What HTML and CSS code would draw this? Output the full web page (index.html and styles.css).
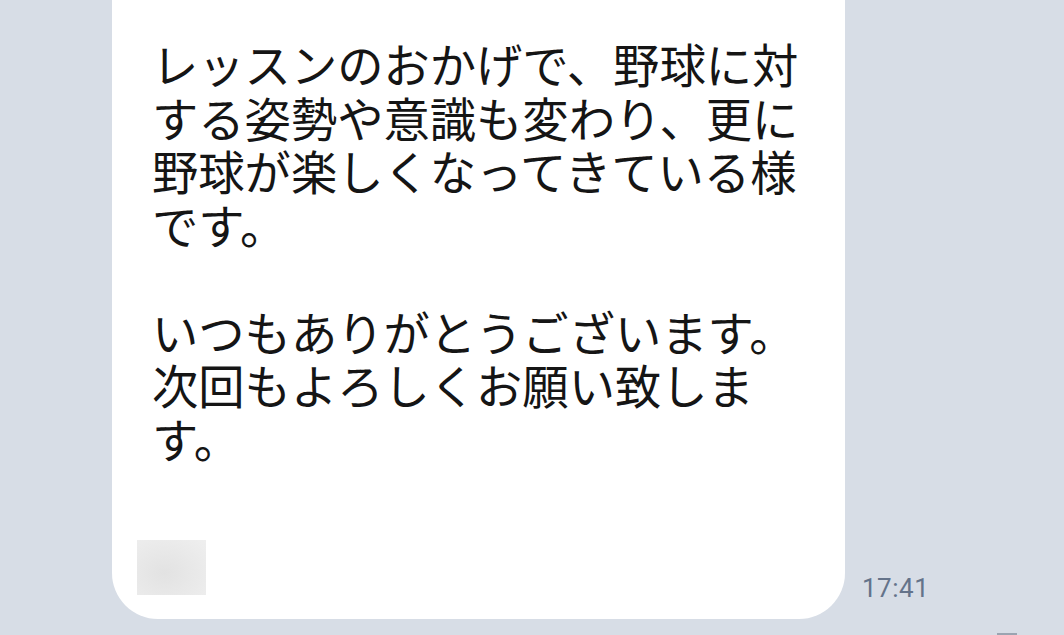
FILE: index.html
```html
<!DOCTYPE html>
<html lang="ja">
<head>
    <meta charset="UTF-8">
    <meta name="viewport" content="width=device-width, initial-scale=1.0">
    <title>Chat</title>
    <link rel="stylesheet" href="styles.css">
</head>
<body>

    <div class="chat">
        <div class="row">
            <div class="bubble">
                <p class="msg">レッスンのおかげで、野球に対<br>する姿勢や意識も変わり、更に<br>野球が楽しくなってきている様<br>です。<br><br>いつもありがとうございます。<br>次回もよろしくお願い致しま<br>す。</p>
                <div class="thumb"></div>
            </div>
            <span class="time">17:41</span>
        </div>
    </div>

    <div class="peek"></div>

</body>
</html>
```

FILE: styles.css
```css
body {
    margin: 0;
    height: 635px;
    overflow: hidden;
    background: #d7dde6;
    font-family: "Noto Sans CJK JP", "Noto Sans", sans-serif;
    position: relative;
}
.chat { padding-left: 112px; }
.row { display: flex; align-items: flex-end; gap: 17px; }

.bubble {
    width: 733px;
    margin-top: -60px;
    padding: 96px 0 24px 0;
    background: #fff;
    border-radius: 46px;
    box-sizing: border-box;
}
.msg {
    margin: 0 0 76px 40px;
    font-size: 46.3px;
    line-height: 53.5px;
    color: #151515;
    white-space: nowrap;
}
.thumb {
    width: 69px;
    height: 55px;
    margin-left: 25px;
    background: radial-gradient(ellipse at 40% 60%, #e2e2e2 0%, #eaeaea 60%, #efefef 100%);
}
.time {
    margin-bottom: 16px;
    font-family: Roboto, "Liberation Sans", sans-serif;
    font-size: 26px;
    color: #64738a;
    letter-spacing: 0.5px;
}

/* next item peeking at the bottom */
.peek {
    position: absolute;
    left: 997px;
    top: 633px;
    width: 20px;
    height: 4px;
    background: #9ba4b1;
}
```
